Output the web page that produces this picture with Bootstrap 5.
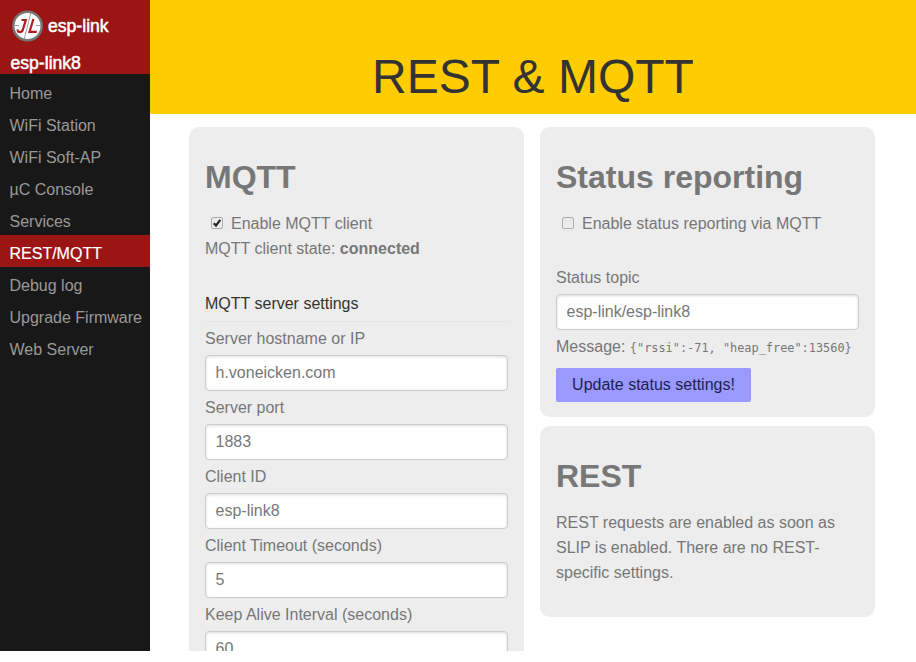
<!DOCTYPE html>
<html lang="en">
<head>
<meta charset="utf-8">
<meta name="viewport" content="width=device-width, initial-scale=1">
<title>esp-link - REST &amp; MQTT</title>
<link href="https://cdn.jsdelivr.net/npm/bootstrap@5.3.0/dist/css/bootstrap.min.css" rel="stylesheet">
<style>
body { font-family: "Liberation Sans", Arial, sans-serif; font-size: 16px; line-height: 25px; color: #777; background: #fff; overflow: hidden; }
.app-shell { height: 651px; }
.side-menu { width: 150px; background: #191818; }
.menu-brand { background: #9b1515; height: 74px; color: #fff; font-size: 17.6px; -webkit-text-stroke: .5px #fff; padding: 10px 0 0 10.5px; }
.brand-row { height: 32px; gap: 4px; padding-left: .5px; }
.host-name { line-height: 42px; }
.side-menu .nav { padding-top: 1px; }
.side-menu .nav-link { color: #999; line-height: 32px; height: 32px; padding: 3px 0 0 9.5px; white-space: nowrap; }
.side-menu .nav-link.active { background: #9b1515; color: #fff; -webkit-text-stroke: .2px #fff; }
.page-head { background: #fc0; height: 114px; padding-top: 53px; }
.page-head h1 { font-size: 48px; line-height: 48px; color: #333; font-weight: 400; }
.board { padding: 13px 41px 0 39px; gap: 16px; }
.board-col { width: 335px; }
.board-col.stacked { gap: 9px; }
.panel { background: #ededed; border-radius: 10px; padding: 25px 16px 15px; }
.panel h2 { font-size: 32px; line-height: 50px; font-weight: 700; margin-bottom: 9px; }
.tick { appearance: none; width: 12px; height: 12px; border: 1px solid #aaa; border-radius: 2px; background: linear-gradient(#e6e6e6, #f0f0f0); margin: 0 8px 1px 6px; }
.tick:checked { background: url("data:image/svg+xml,%3Csvg xmlns='http://www.w3.org/2000/svg' viewBox='0 0 10 10'%3E%3Cpath d='M1.8 5.2L4 7.6L8.2 1.8' fill='none' stroke='%23222' stroke-width='2.2'/%3E%3C/svg%3E") center/10px no-repeat, #ececec; }
.group-title { color: #333; margin-top: 30px; padding-bottom: 5px; border-bottom: 1px solid #e5e5e5; font-size: 16px; line-height: 25px; }
.field-label { display: block; margin: 4px 0; }
.field-label.spaced { margin-top: 29px; }
.panel .form-control { height: 36px; padding: 1px 10px; border: 1px solid #ccc; border-radius: 4px; color: #777; box-shadow: inset 0 1px 3px #ddd; font-size: 16px; line-height: 32px; text-indent: -.5px; }
.msg-code { font-family: "DejaVu Sans Mono", monospace; font-size: 11.9px; color: #777; line-height: 1; }
.btn-update { background: #99f; color: #1f1f4d; border: 0; border-radius: 2px; height: 34px; width: 195px; padding: 0; font-size: 16px; line-height: 32px; margin-top: 9px; }
</style>
<script src="https://cdn.jsdelivr.net/npm/bootstrap@5.3.0/dist/js/bootstrap.bundle.min.js"></script>
</head>
<body>
<div class="app-shell d-flex overflow-hidden">
  <aside class="side-menu flex-shrink-0">
    <div class="menu-brand">
      <div class="brand-row d-flex align-items-center">
        <svg width="33" height="33" viewBox="0 0 33 33" class="flex-shrink-0" aria-hidden="true">
          <circle cx="16.5" cy="16" r="14.2" fill="#fff" stroke="#777" stroke-width="2.4"/>
          <path d="M2.500 15.500H8M25 15.500h5.500M19.800 3L13.200 29" stroke="#888" stroke-width=".8" fill="none"/>
          <path d="M10.500 10h4.300l-2.900 9.600q-.8 2.500-3 2.500-2.300 0-2.300-2.700M22.400 9l-3.900 12.900h7.300" stroke="#b01c20" stroke-width="2.200" fill="none"/>
        </svg>
        <span>esp-link</span>
      </div>
      <div class="host-name">esp-link8</div>
    </div>
    <nav class="nav flex-column">
      <a class="nav-link" href="#">Home</a>
      <a class="nav-link" href="#">WiFi Station</a>
      <a class="nav-link" href="#">WiFi Soft-AP</a>
      <a class="nav-link" href="#">µC Console</a>
      <a class="nav-link" href="#">Services</a>
      <a class="nav-link active" href="#">REST/MQTT</a>
      <a class="nav-link" href="#">Debug log</a>
      <a class="nav-link" href="#">Upgrade Firmware</a>
      <a class="nav-link" href="#">Web Server</a>
    </nav>
  </aside>
  <main class="flex-grow-1">
    <header class="page-head text-center"><h1 class="m-0">REST &amp; MQTT</h1></header>
    <div class="board d-flex align-items-start">
      <div class="board-col">
        <section class="panel">
          <h2 class="mt-0">MQTT</h2>
          <label class="d-flex align-items-center"><input type="checkbox" class="tick" checked>Enable MQTT client</label>
          <div>MQTT client state: <b>connected</b></div>
          <div class="group-title">MQTT server settings</div>
          <label class="field-label" for="host">Server hostname or IP</label>
          <input class="form-control" id="host" value="h.voneicken.com">
          <label class="field-label" for="port">Server port</label>
          <input class="form-control" id="port" value="1883">
          <label class="field-label" for="client">Client ID</label>
          <input class="form-control" id="client" value="esp-link8">
          <label class="field-label" for="timeout">Client Timeout (seconds)</label>
          <input class="form-control" id="timeout" value="5">
          <label class="field-label" for="keep">Keep Alive Interval (seconds)</label>
          <input class="form-control" id="keep" value="60">
        </section>
      </div>
      <div class="board-col stacked d-flex flex-column">
        <section class="panel">
          <h2 class="mt-0">Status reporting</h2>
          <label class="d-flex align-items-center"><input type="checkbox" class="tick">Enable status reporting via MQTT</label>
          <label class="field-label spaced" for="topic">Status topic</label>
          <input class="form-control" id="topic" value="esp-link/esp-link8">
          <div class="mt-1 text-nowrap">Message: <span class="msg-code">{"rssi":-71, "heap_free":13560}</span></div>
          <button type="button" class="btn btn-update d-block">Update status settings!</button>
        </section>
        <section class="panel pb-4">
          <h2 class="mt-0">REST</h2>
          <p class="mb-2">REST requests are enabled as soon as SLIP is enabled. There are no REST-specific settings.</p>
        </section>
      </div>
    </div>
  </main>
</div>
</body>
</html>
